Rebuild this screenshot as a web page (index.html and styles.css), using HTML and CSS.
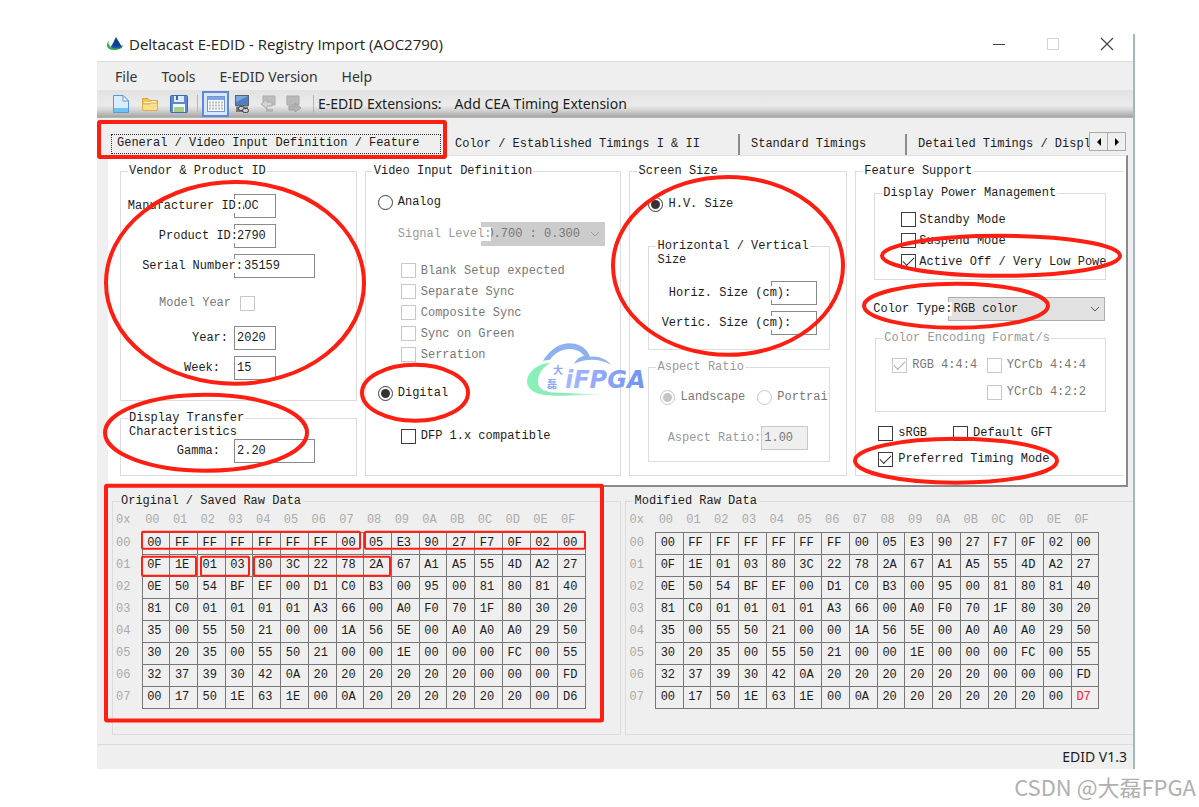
FILE: index.html
```html
<!DOCTYPE html>
<html lang="en">
<head>
<meta charset="utf-8">
<title>Deltacast E-EDID</title>
<link rel="stylesheet" href="styles.css">
</head>
<body>
<main class="window">
  <header class="titlebar">
    <svg class="app-icon" width="18" height="16" viewBox="0 0 18 16">
      <path d="M10 1 16 11Q10 14 5 11Z" fill="#12408c"/>
      <path d="M3 5C-1 9 1 14 8 14 13 14 17 12 17 9 14 12 8 13 5 11 3 9 2 8 3 5Z" fill="#3fae49"/>
      <path d="M5 11Q10 14 16 11L15 9Q10 12 6 9Z" fill="#1a57a8"/>
    </svg>
    <h1 class="title">Deltacast E-EDID - Registry Import (AOC2790)</h1>
    <button class="win-btn" aria-label="Minimize"><svg width="14" height="14" viewBox="0 0 14 14"><path d="M1 7.500H13" stroke="#444"/></svg></button>
    <button class="win-btn" aria-label="Maximize" disabled><svg width="14" height="14" viewBox="0 0 14 14"><rect x="1.500" y="1.500" width="11" height="11" fill="none" stroke="#d4d4d4"/></svg></button>
    <button class="win-btn" aria-label="Close"><svg width="14" height="14" viewBox="0 0 14 14"><path d="M1 1 13 13M13 1 1 13" stroke="#444" stroke-width="1.200"/></svg></button>
  </header>
  <nav class="menubar">
    <button class="menu">File</button><button class="menu">Tools</button><button class="menu">E-EDID Version</button><button class="menu">Help</button>
  </nav>
  <div class="toolbar">
    <button class="tool" aria-label="New"><svg width="20" height="20" viewBox="0 0 20 20"><path d="M2.500 1.500H12L17.500 7V18.500H2.500Z" fill="#d9edfc" stroke="#5b97d6"/><path d="M12 1.500V7H17.500Z" fill="#fff" stroke="#5b97d6"/><path d="M3 14H17V18H3Z" fill="#6cc4f4"/></svg></button>
    <button class="tool" aria-label="Open"><svg width="20" height="20" viewBox="0 0 20 20"><path d="M2.500 16.500V4.500H8L10 6.500H17.500V16.500Z" fill="#f3c65c" stroke="#dda23a"/><path d="M4 8H11L12 7H16V9H4Z" fill="#fff8dc"/><path d="M2.500 16.500V10H10L11 9H17.500V16.500Z" fill="#fbe08c" stroke="#e5ae45"/></svg></button>
    <button class="tool" aria-label="Save"><svg width="20" height="20" viewBox="0 0 20 20"><rect x="1.500" y="1.500" width="17" height="17" rx="1" fill="#5c88d0" stroke="#4068b0"/><rect x="5" y="2" width="10" height="6" fill="#dfe9f8"/><rect x="7" y="2" width="2" height="4" fill="#4068b0"/><rect x="4" y="10" width="12" height="8" fill="#f2f7fd"/><rect x="5" y="13" width="10" height="5" fill="#a5cf87"/></svg></button>
    <span class="sep"></span>
    <button class="tool tool-on" aria-label="Table view" aria-pressed="true"><svg width="18" height="16" viewBox="0 0 18 16"><rect x=".5" y=".5" width="17" height="15" fill="#fff" stroke="#6f96d8"/><path d="M1 1H17V4H1Z" fill="#7ea4e2"/><path d="M2 6.500H16M2 9.500H16M2 12.500H16" stroke="#b4bccb" stroke-width="2" stroke-dasharray="2 1"/></svg></button>
    <button class="tool tool-small" aria-label="Read from display"><svg width="20" height="20" viewBox="0 0 20 20"><rect x="3.500" y="1.500" width="13" height="10" fill="#4f80c6" stroke="#5a6470"/><path d="M4 2H16L4 8Z" fill="#7fa8de"/><path d="M4 12.500H16V18H4Z" fill="#77797c"/><g fill="none" stroke="#3d3f42"><rect x="6.500" y="12.500" width="6" height="4" rx="2" fill="#ccc"/><rect x="10.500" y="14.500" width="6" height="4" rx="2" fill="#ccc"/></g></svg></button>
    <button class="tool tool-small" aria-label="Import from display" disabled><svg width="20" height="20" viewBox="0 0 20 20"><path d="M5 2H17V11H5Z" fill="#bdbdbd" stroke="#adadad"/><path d="M3 10 9 5V8H14V12H9V15Z" fill="#d3d3d3" stroke="#adadad"/><path d="M8 15H15V18H8Z" fill="#b5b5b5"/></svg></button>
    <button class="tool tool-small" aria-label="Export to display" disabled><svg width="20" height="20" viewBox="0 0 20 20"><path d="M3 2H15V11H3Z" fill="#b9b9b9" stroke="#a9a9a9"/><path d="M5 12H11V9L17 14 11 18V16H5Z" fill="#b3b3b3" stroke="#a0a0a0"/></svg></button>
    <span class="sep"></span>
    <span class="tool-text">E-EDID Extensions:</span>
    <button class="tool-text">Add CEA Timing Extension</button>
  </div>

  <div class="tabs" role="tablist">
    <button class="tab tab-active" role="tab" aria-selected="true"><span class="focus">General / Video Input Definition / Feature</span></button>
    <button class="tab" role="tab">Color / Established Timings I &amp; II</button>
    <button class="tab" role="tab">Standard Timings</button>
    <button class="tab tab-last" role="tab">Detailed Timings / Display</button>
    <div class="scrollers">
      <button class="scroller" aria-label="Previous tabs"><svg width="8" height="8" viewBox="0 0 8 8"><path d="M6 0V8L2 4Z"/></svg></button>
      <button class="scroller" aria-label="Next tabs"><svg width="8" height="8" viewBox="0 0 8 8"><path d="M2 0V8L6 4Z"/></svg></button>
    </div>
  </div>

  <section class="page">
    <div class="column">
      <fieldset class="group vendor">
        <legend>Vendor &amp; Product ID</legend>
        <div class="field"><label class="cover" for="mid">Manufacturer ID:</label><input id="mid" class="short" value="AOC"></div>
        <div class="field"><label class="cover narrow" for="pid">Product ID:</label><input id="pid" class="short" value="2790"></div>
        <div class="field"><label class="cover" for="sn">Serial Number:</label><input id="sn" class="long indent" value="35159"></div>
        <div class="field model"><label for="my">Model Year</label><input id="my" type="checkbox" disabled></div>
        <div class="field"><label class="year" for="yr">Year:</label><input id="yr" class="short" value="2020"></div>
        <div class="field"><label class="week" for="wk">Week:</label><input id="wk" class="short" value="15"></div>
      </fieldset>
      <fieldset class="group gamma">
        <legend>Display Transfer<br>Characteristics</legend>
        <div class="field"><label class="week" for="gm">Gamma:</label><input id="gm" class="long" value="2.20"></div>
      </fieldset>
    </div>

    <fieldset class="group video">
      <legend>Video Input Definition</legend>
      <label class="opt"><input type="radio" name="input">Analog</label>
      <div class="level"><label class="cover" for="lvl">Signal Level:</label>
        <span class="select"><select id="lvl" disabled><option>0.700 : 0.300</option></select><svg class="chevron" width="10" height="6" viewBox="0 0 10 6"><path d="M1 1 5 5 9 1" fill="none" stroke="#999"/></svg></span></div>
      <div class="checks sync">
        <label class="opt"><input type="checkbox" disabled>Blank Setup expected</label>
        <label class="opt"><input type="checkbox" disabled>Separate Sync</label>
        <label class="opt"><input type="checkbox" disabled>Composite Sync</label>
        <label class="opt"><input type="checkbox" disabled>Sync on Green</label>
        <label class="opt"><input type="checkbox" disabled>Serration</label>
      </div>
      <label class="opt digital"><input type="radio" name="input" checked>Digital</label>
      <label class="opt dfp"><input type="checkbox">DFP 1.x compatible</label>
    </fieldset>

    <fieldset class="group screen">
      <legend>Screen Size</legend>
      <label class="opt hv"><input type="radio" name="size" checked>H.V. Size</label>
      <fieldset class="group cm">
        <legend>Horizontal / Vertical<br>Size</legend>
        <div class="field"><label class="cover" for="hs">Horiz. Size (cm):</label><input id="hs"></div>
        <div class="field"><label class="cover" for="vs">Vertic. Size (cm):</label><input id="vs"></div>
      </fieldset>
      <fieldset class="group aspect">
        <legend>Aspect Ratio</legend>
        <div class="pair"><label class="opt"><input type="radio" name="aspect" checked disabled>Landscape</label><label class="opt"><input type="radio" name="aspect" disabled>Portrait</label></div>
        <div class="field ratio"><label for="ar">Aspect Ratio:</label><input id="ar" value="1.00" disabled></div>
      </fieldset>
    </fieldset>

    <fieldset class="group feature">
      <legend>Feature Support</legend>
      <fieldset class="group power">
        <legend>Display Power Management</legend>
        <div class="checks">
          <label class="opt"><input type="checkbox">Standby Mode</label>
          <label class="opt"><input type="checkbox">Suspend Mode</label>
          <label class="opt"><input type="checkbox" checked>Active Off / Very Low Power</label>
        </div>
      </fieldset>
      <div class="level color-type"><label class="cover" for="ct">Color Type:</label>
        <span class="select"><select id="ct"><option>RGB color</option></select><svg class="chevron" width="10" height="6" viewBox="0 0 10 6"><path d="M1 1 5 5 9 1" fill="none" stroke="#555"/></svg></span></div>
      <fieldset class="group encoding">
        <legend>Color Encoding Format/s</legend>
        <label class="opt"><input type="checkbox" checked disabled>RGB 4:4:4</label>
        <label class="opt"><input type="checkbox" disabled>YCrCb 4:4:4</label>
        <label class="opt second"><input type="checkbox" disabled>YCrCb 4:2:2</label>
      </fieldset>
      <div class="pair flags"><label class="opt"><input type="checkbox">sRGB</label><label class="opt"><input type="checkbox">Default GFT</label></div>
      <label class="opt preferred"><input type="checkbox" checked>Preferred Timing Mode</label>
    </fieldset>
  </section>

  <section class="raw">
    <fieldset class="group dump">
      <legend>Original / Saved Raw Data</legend>
      <table class="hex" id="saved"></table>
    </fieldset>
    <fieldset class="group dump dump-right">
      <legend>Modified Raw Data</legend>
      <table class="hex" id="modified"></table>
    </fieldset>
  </section>
  <footer class="status">EDID V1.3</footer>

  <svg class="marks" viewBox="97 34 1038 735" preserveAspectRatio="none">
    <g fill="none" stroke="#ff1f12" stroke-width="4">
      <rect x="99" y="122" width="346" height="35" rx="1"/>
      <ellipse cx="235" cy="283" rx="129" ry="101"/>
      <ellipse cx="206" cy="433" rx="101" ry="38"/>
      <ellipse cx="415" cy="393" rx="53" ry="28"/>
      <ellipse cx="728" cy="266" rx="115" ry="89"/>
      <ellipse cx="1001" cy="256" rx="119" ry="20"/>
      <ellipse cx="956" cy="306" rx="92" ry="22"/>
      <ellipse cx="956" cy="461" rx="101" ry="22"/>
      <rect x="106" y="486" width="496" height="235" rx="1"/>
      <g stroke-width="2">
        <rect x="142" y="532" width="218" height="17" rx="1"/>
        <rect x="365" y="532" width="220" height="17" rx="1"/>
        <rect x="142" y="557" width="54" height="19" rx="1"/>
        <rect x="201" y="557" width="48" height="19" rx="1"/>
        <rect x="254" y="557" width="136" height="19" rx="1"/>
      </g>
    </g>
    <defs>
      <linearGradient id="blue" x1="0" y1="0" x2="1" y2="0"><stop offset="0" stop-color="#a9b9ff"/><stop offset="1" stop-color="#6f93ee"/></linearGradient>
      <linearGradient id="green" x1="0" y1="0" x2="1" y2="0"><stop offset="0" stop-color="#8bf0b8"/><stop offset=".5" stop-color="#8be9bd"/><stop offset="1" stop-color="#8be9bd" stop-opacity="0"/></linearGradient>
    </defs>
    <path d="M543 361C553 345 565 342 575 344 583 346 588 351 590 357 598 356 606 359 611 365 600 359 587 358 574 364 577 359 580 357 584 356 576 345 558 348 550 360Z" fill="#8fb1ee"/>
    <path d="M550 363C534 364 524 377 528 386 532 395 545 396 560 396L608 395 560 393C546 393 538 390 538 382 538 374 543 368 550 363Z" fill="url(#green)"/>
    <text class="logo-cn" x="553" y="374" fill="#8fa9f5">大</text>
    <text class="logo-cn" x="547" y="388" fill="#8fa9f5">磊</text>
    <text class="logo" x="565" y="388" fill="url(#blue)">iFPGA</text>
  </svg>
</main>
<footer class="credit">CSDN @大磊FPGA</footer>
<script src="script.js"></script>
</body>
</html>
```
FILE: styles.css
```css
* { box-sizing: border-box; }

body {
  margin: 0;
  padding: 34px 0 0;
  background: #fff;
  color: #1c1c1c;
  font: 12px/14px "Liberation Mono", monospace;
}

button, input, select { font: inherit; color: inherit; margin: 0; border-radius: 0; }
button { border: 0; background: none; padding: 0; }

.window {
  position: relative;
  margin: 0 64px 0 97px;
  background: #efefef;
  border-right: 2px solid #a3b6c3;
  overflow: hidden;
}

.titlebar, .menubar, .toolbar, .tool-text, .status { font-family: "Noto Sans", sans-serif; font-size: 14px; line-height: 20px; }

.titlebar {
  display: flex;
  align-items: center;
  height: 28px;
  padding: 0 19px 8px 9px;
  background: #fff;
  border-bottom: 1px solid #dcdcdc;
}
.app-icon { margin-right: 5px; }
.title { flex: 1; margin: 0; font: 400 15px/20px "Open Sans", sans-serif; color: #222; }
.win-btn { display: flex; margin-left: 40px; }

.menubar { display: flex; gap: 24px; height: 28px; padding: 5px 18px 3px; color: #333; }

.toolbar {
  display: flex;
  align-items: center;
  height: 28px;
  padding-left: 13px;
  background: linear-gradient(#e2e2e2, #ebebeb 55%, #cfcfcf 75%, #a6a6a6 96%, #c4bfb2);
}
.tool { display: flex; align-items: center; justify-content: center; width: 22px; height: 22px; margin-right: 7px; }
.tool-on { width: 27px; height: 26px; margin-right: 2px; background: #dbe7f8; border: 2px solid #5c8ad8; }
.tool-small { margin-right: 4px; }
.sep { width: 1px; height: 18px; margin: 0 4px 0 0; background: #b9b5a8; }
.tool-small + .sep { margin-left: 4px; }
.tool-text { margin-right: 13px; white-space: nowrap; }

.tabs {
  display: grid;
  grid-template-columns: 338fr 294fr 167fr 182fr 37px;
  margin: 14px 7px 0 11px;
  height: 23px;
}
.tab {
  min-width: 0;
  margin-top: 2px;
  padding: 0 0 1px 9px;
  border-right: 2px solid #8c8c8c;
  overflow: hidden;
  text-align: left;
  white-space: nowrap;
}
.tab + .tab { padding-left: 11px; }
.tab + .tab:nth-child(2) { padding-left: 9px; }
.tab-active { margin: 0; padding: 1px 5px 1px 3px; border: 0; }
.tab.tab-last { border: 0; }
.focus { display: block; height: 20px; padding: 1px 5px; border: 1px dotted #333; }
.scrollers { display: flex; height: 19px; background: #efefef; border: 1px solid #aaa; }
.scroller { display: flex; flex: 1; align-items: center; justify-content: center; }
.scroller + .scroller { border-left: 1px solid #aaa; }

.page {
  display: grid;
  grid-template-columns: 237fr 257fr 218fr 268fr;
  gap: 8px;
  margin: 0 5px 0 11px;
  padding: 8px 3px 9px 12px;
  background: #fff;
  border: solid #8a8a8a;
  border-width: 1px 2px 2px 0;
  border-top-color: #e0e0e0;
}
.column { display: flex; flex-direction: column; gap: 10px; min-width: 0; }

.group {
  --inset: 0px;
  display: flex;
  flex-direction: column;
  min-width: 0;
  margin: 0;
  padding: 0 0 0 var(--inset);
  border: 1px solid #dcdcdc;
}
.group legend { height: 14px; margin-left: calc(7px - var(--inset)); padding: 0 1px; white-space: nowrap; }

.field { position: relative; display: flex; align-items: center; height: 24px; }
.field label { text-align: right; white-space: nowrap; }
.field input:not([type]) { height: 24px; padding: 0 0 1px 2px; border: 1px solid #8a8a8a; background: #fff; }
.cover { position: relative; z-index: 1; background: #fff; }

input[type=checkbox], input[type=radio] {
  flex: none;
  display: grid;
  place-content: center;
  appearance: none;
  width: 15px;
  height: 15px;
  border: 1px solid #3c3c3c;
  background: #fff;
}
input[type=radio] { border-radius: 50%; }
input[type=radio]:checked::after { content: ""; width: 9px; height: 9px; border-radius: 50%; background: #333; }
input[type=checkbox]:checked::after {
  content: "";
  width: 10px;
  height: 5px;
  margin-bottom: 3px;
  border: solid #333;
  border-width: 0 0 1px 1px;
  transform: rotate(-45deg);
}
input[type=checkbox]:disabled, input[type=radio]:disabled { border-color: #c8c8c8; }
input[type=radio]:checked:disabled::after { background: #c4c4c4; }
input[type=checkbox]:checked:disabled::after { border-color: #aaa; }

.opt { display: flex; align-items: center; gap: 5px; height: 16px; white-space: nowrap; }
.opt:has(:disabled) { color: #777; }
.checks .opt { height: 21px; }
.pair { display: flex; }

.vendor { padding: 16px 0 20px; gap: 6px; }
.vendor .field > label, .gamma .field > label { width: 113px; }
.short { width: 42px; }
.long { width: 81px; }
.field .indent:not([type]) { padding-left: 9px; }
.vendor .field > label.cover { width: 122px; margin-right: -9px; background: none; }
.vendor .field > label.cover.narrow { width: 117px; margin-right: -4px; }
.vendor .cover::before { content: ""; position: absolute; z-index: -1; inset: 0 0 0 auto; width: 14px; background: #fff; }
.vendor .narrow::before { width: 6px; }
.vendor .model { margin: 7px 0 5px; color: #777; }
.vendor .model > label { width: 110px; margin-right: 9px; }
.field .year { padding-right: 6px; }
.field .week { padding-right: 14px; }
.gamma { flex: 1; padding: 14px 0 11px; }

.video { padding: 16px 0 0; }
.video > .opt { margin-left: 12px; }
.level { display: flex; align-items: center; }
.video .level { margin: 12px 15px 0 32px; color: #999; }
.level .cover { margin-right: -10px; }
.select { position: relative; display: flex; flex: 1; min-width: 0; }
.select select { appearance: none; width: 100%; height: 24px; padding: 0 4px; border: 1px solid #adadad; background: #e1e1e1; opacity: 1; }
.select select:disabled { border-color: #ccc; background: #ccc; color: #777; }
.chevron { position: absolute; right: 5px; top: 9px; }
.sync { margin: 14px 0 20px 35px; }
.video > .dfp { margin: 27px 0 0 35px; }

.screen { --inset: 18px; padding: 18px 16px 12px var(--inset); }
.cm { --inset: 4px; margin-top: 27px; padding: 28px 12px 14px var(--inset); gap: 6px; }
.cm .field { justify-content: flex-end; }
.cm .field label { background: none; margin-right: -20px; }
.cm .field label::before { content: ""; position: absolute; z-index: -1; inset: 0 0 0 auto; width: 21px; background: #fff; }
.cm input { width: 46px; }
.aspect { --inset: 11px; margin-top: 10px; padding: 15px 0 11px var(--inset); color: #999; overflow: clip; }
.aspect .pair { gap: 12px; }
.ratio { justify-content: flex-end; margin: 21px 21px 0 0; }
.ratio input:not([type]) { width: 47px; border-color: #c8c8c8; background: #efefef; color: #777; }

.feature { padding: 8px 0 8px; border-right: 0; }
.power { --inset: 26px; margin: 0 17px 0 18px; padding: 9px 0 7px var(--inset); }
.power .opt { gap: 3px; width: 207px; overflow: clip; }
.feature .color-type { margin: 17px 18px 0 17px; }
.color-type .cover { margin-right: -4px; }
.encoding { --inset: 16px; display: grid; grid-template-columns: 95fr 119fr; gap: 11px 0; margin: 10px 17px 0 19px; padding: 12px 0 11px var(--inset); color: #999; }
.encoding .second { grid-column: 2; }
.flags { gap: 26px; margin: 13px 0 10px 22px; }
.preferred { margin-left: 22px; }

.raw { display: grid; grid-template-columns: 510fr 508fr; gap: 4px; margin: 7px 0 9px 15px; }
.dump { padding: 0 0 25px; }
.dump-right { border-right: 0; }
.hex { width: 472px; margin-left: 1px; border-collapse: collapse; table-layout: fixed; text-align: center; }
.hex tr { height: 22px; }
.hex th { padding: 0 7px 0 0; color: #aaa; font-weight: 400; }
.hex td { padding: 0 3px 0 0; border: 1px solid #777; }
.hex thead th { height: 24px; }
.hex th:first-child { width: 28px; padding: 0 0 0 2px; text-align: left; }
.hex .changed { color: #ff2020; }

.status { height: 25px; padding: 2px 6px; border-top: 1px solid #dcdcdc; text-align: right; }

.marks { position: absolute; z-index: 2; inset: 0; width: calc(100% + 2px); height: 100%; pointer-events: none; }
.logo { font: italic bold 24px "DejaVu Sans", sans-serif; }
.logo-cn { font: bold 10px "Noto Sans CJK SC", sans-serif; }

.credit {
  padding: 3px;
  color: #b0b0b0;
  font: 22px/28px "Noto Sans CJK SC", sans-serif;
  text-align: right;
}
```
FILE: script.js
```js
const rows = [
  "00 FF FF FF FF FF FF 00 05 E3 90 27 F7 0F 02 00",
  "0F 1E 01 03 80 3C 22 78 2A 67 A1 A5 55 4D A2 27",
  "0E 50 54 BF EF 00 D1 C0 B3 00 95 00 81 80 81 40",
  "81 C0 01 01 01 01 A3 66 00 A0 F0 70 1F 80 30 20",
  "35 00 55 50 21 00 00 1A 56 5E 00 A0 A0 A0 29 50",
  "30 20 35 00 55 50 21 00 00 1E 00 00 00 FC 00 55",
  "32 37 39 30 42 0A 20 20 20 20 20 20 00 00 00 FD",
  "00 17 50 1E 63 1E 00 0A 20 20 20 20 20 20 00"
].map(line => line.split(" "));

function fill(id, checksum, changed) {
  const head = ["0x"];
  for (let i = 0; i < 16; i++) head.push("0" + i.toString(16).toUpperCase());
  const body = rows.map((row, r) => {
    const cells = r === 7 ? [...row, checksum] : row;
    const tds = cells.map((value, c) =>
      `<td${changed && r === 7 && c === 15 ? ' class="changed"' : ""}>${value}</td>`);
    return `<tr><th scope="row">0${r}</th>${tds.join("")}</tr>`;
  });
  document.getElementById(id).innerHTML =
    `<thead><tr>${head.map(h => `<th scope="col">${h}</th>`).join("")}</tr></thead><tbody>${body.join("")}</tbody>`;
}

fill("saved", "D6", false);
fill("modified", "D7", true);
```
